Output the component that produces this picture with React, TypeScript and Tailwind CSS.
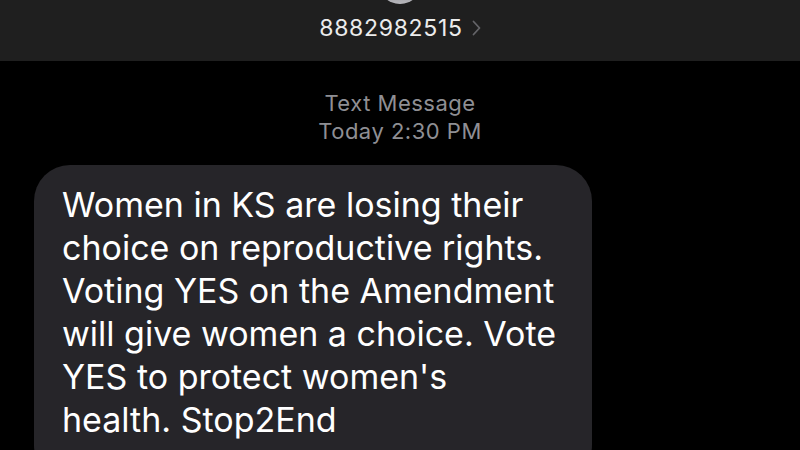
export default function App() {
  return (
    <div
      className="w-[800px] h-[450px] overflow-hidden bg-black flex flex-col"
      style={{ fontFamily: "Inter, 'Liberation Sans', sans-serif" }}
    >
      <header className="relative h-[61px] shrink-0 bg-[#1f1f1f] flex justify-center pt-[11px]">
        <div className="absolute left-[378px] top-[-40px] w-[44px] h-[44px] rounded-full bg-gradient-to-b from-[#4a4a4e] to-[#b8b8bd]" />
        <div className="flex items-center gap-[9px] h-[34px]">
          <span className="text-[23px] leading-none text-[#ececec] tracking-[0.7px]">8882982515</span>
          <svg width="9" height="16" viewBox="0 0 9 16" fill="none">
            <path d="M1.5 1.5 7.5 8l-6 6.5" stroke="#646468" strokeWidth="1.8" strokeLinecap="round" strokeLinejoin="round" />
          </svg>
        </div>
      </header>

      <div className="flex flex-col items-center pt-[28px] text-[#8f8f94] text-[22px] leading-[28px] tracking-[0.5px]">
        <span>Text Message</span>
        <span>Today 2:30 PM</span>
      </div>

      <div className="relative mt-[20px] ml-[34px] w-[558px] shrink-0 rounded-[36px] bg-[#262529] pl-[28px] pr-[16px] pt-[18px] pb-[40px]">
        <p className="text-white text-[34px] leading-[43px]">
          Women in KS are losing their
          <br />
          choice on reproductive rights.
          <br />
          Voting YES on the Amendment
          <br />
          will give women a choice. Vote
          <br />
          YES to protect women's
          <br />
          health. Stop2End
        </p>
        <svg className="absolute left-[-8px] bottom-[-6px]" width="30" height="30" viewBox="0 0 30 30">
          <path d="M8 0v22c0 4-3 7-8 8 8 0 14-2 18-6L8 0z" fill="#262529" />
        </svg>
      </div>
    </div>
  );
}
